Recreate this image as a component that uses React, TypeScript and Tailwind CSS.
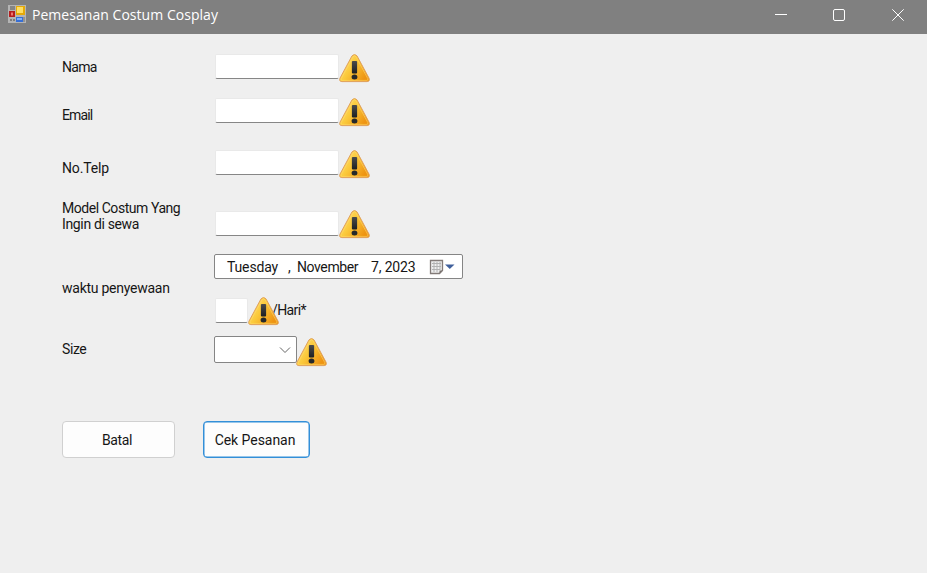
import React from 'react';

function Warning({ className = '' }: { className?: string }) {
  return (
    <svg className={`block shrink-0 ${className}`} width="31" height="29" viewBox="0 0 32 29" preserveAspectRatio="none">
      <defs>
        <linearGradient id="gold" x1="0" y1="0" x2="1" y2="0.6">
          <stop offset="0" stopColor="#ffe28a" />
          <stop offset="0.5" stopColor="#fbca3c" />
          <stop offset="1" stopColor="#ee9413" />
        </linearGradient>
        <linearGradient id="bar" x1="0" y1="0" x2="0" y2="1">
          <stop offset="0" stopColor="#4b4b4b" />
          <stop offset="1" stopColor="#1c1f22" />
        </linearGradient>
      </defs>
      <path d="M13.4 1.9Q16 -1 18.6 1.9L31 24.2Q32.2 27.6 29 27.6H3Q-.2 27.6 1 24.2Z" fill="url(#gold)" stroke="#dfa05a" strokeWidth="1" />
      <path d="M14.5 2.8Q16 .9 17.5 2.8L29.8 24.7Q30.3 26.4 28.8 26.4H3.2Q1.7 26.4 2.2 24.7Z" fill="none" stroke="#ffdd70" strokeOpacity=".55" strokeWidth="1" />
      <rect x="13.3" y="7" width="5.4" height="12.5" rx="1" fill="url(#bar)" />
      <ellipse cx="16" cy="23" rx="3" ry="2.5" fill="#26292b" />
    </svg>
  );
}

function TextBox({ className }: { className: string }) {
  return <input className={`block h-[25px] shrink-0 rounded-[2px] border border-[#e9e9e9] border-b-[#868686] bg-white outline-none ${className}`} />;
}

function AppIcon() {
  return (
    <svg className="block" width="18" height="18" viewBox="0 0 18 18">
      <rect width="18" height="18" fill="#b4b4b4" />
      <rect x="2" y="1" width="5" height="4" fill="#858585" />
      <rect x="1" y="6" width="6" height="6" fill="#b51e1e" />
      <rect x="3" y="7.5" width="2" height="3" fill="#ef7770" />
      <rect x="8" y="1" width="9" height="9" fill="#e5a908" />
      <rect x="9" y="2" width="6" height="6" fill="#ffdf63" />
      <rect x="8" y="12" width="7" height="5" fill="#376fd5" />
      <rect x="9" y="13" width="5" height="2" fill="#7fb1fa" />
      <rect x="2" y="14" width="2" height="2" fill="#7d7d7d" />
      <rect x="5" y="14" width="2" height="2" fill="#7d7d7d" />
      <rect x="15" y="12" width="2" height="5" fill="#929292" />
    </svg>
  );
}

function CalendarIcon() {
  return (
    <svg className="block shrink-0" width="26" height="16" viewBox="0 0 26 16">
      <path d="M1.5 1.5h12v10l-3 3h-9z" fill="#eeeeee" stroke="#837b78" strokeWidth="1.3" />
      <path d="M3 4.5h9M3 7.5h9M3 10.5h8M5 3v10M8 3v10M11 3v8" stroke="#b2b2b2" strokeWidth="1" />
      <path d="M10.5 14.5v-3h3z" fill="#77706d" />
      <path d="M16 5.5h9.5L20.8 10z" fill="#40609c" />
    </svg>
  );
}

export default function App() {
  return (
    <div className="h-[573px] w-[927px] overflow-hidden bg-[#efefef] font-[Roboto,sans-serif] text-[14px] leading-4 text-[#161616]">
      <header className="flex h-[34px] bg-[#808080] pl-2 text-white">
        <div className="pt-[5px]"><AppIcon /></div>
        <h1 className="ml-[6px] mt-[5px] whitespace-nowrap font-['Open_Sans',sans-serif] text-[14px] leading-5 tracking-[0.04px]">Pemesanan Costum Cosplay</h1>
        <svg className="ml-auto block" width="177" height="34" viewBox="0 0 177 34" fill="none" stroke="white">
          <path d="M25 14.5h12" />
          <rect x="83.5" y="9.5" width="11" height="11" rx="1.5" />
          <path d="M142.3 9.3l11.4 11.4M153.7 9.3l-11.4 11.4" />
        </svg>
      </header>
      <main className="pl-[62px] pt-5">
        <div className="flex h-11 items-start">
          <label className="mt-[5px] w-[153px] tracking-[-0.7px]"><span className="tracking-[-0.7px]">Nama</span></label>
          <TextBox className="w-[124px]" />
          <Warning />
        </div>
        <div className="flex h-[52px] items-start">
          <label className="mt-[9px] w-[153px] tracking-[-0.85px]">Email</label>
          <TextBox className="w-[124px]" />
          <Warning />
        </div>
        <div className="flex h-[50px] items-start">
          <label className="mt-[10px] w-[153px] tracking-[-0.15px]">No.Telp</label>
          <TextBox className="w-[124px]" />
          <Warning />
        </div>
        <div className="flex h-[54px] items-start">
          <label className="w-[153px] whitespace-nowrap"><span className="tracking-[-0.45px]">Model Costum Yang</span><br /><span className="tracking-[-0.35px]">Ingin di sewa</span></label>
          <TextBox className="mt-[11px] w-[124px]" />
          <Warning className="mt-[10px]" />
        </div>
        <div className="flex h-[84px] items-start">
          <label className="mt-[26px] w-[152px] tracking-[-0.25px]">waktu penyewaan</label>
          <div>
            <div className="flex h-[25px] w-[249px] items-center whitespace-nowrap rounded-[2px] border border-[#858585] bg-white pl-3">
              <span className="w-[61px] tracking-[-0.15px]">Tuesday</span>
              <span className="w-[9px]">,</span>
              <span className="w-[74px] tracking-[-0.4px]">November</span>
              <span className="w-[58px] tracking-[-0.15px]">7, 2023</span>
              <CalendarIcon />
            </div>
            <div className="mt-[18px] flex items-start pl-px">
              <TextBox className="mt-px w-[33px]" />
              <Warning className="relative z-10" />
              <span className="-ml-[7px] mt-[5px] tracking-[-0.6px]">/Hari*</span>
            </div>
          </div>
        </div>
        <div className="flex h-[83px] items-start">
          <label className="mt-[3px] w-[152px] tracking-[-0.4px]">Size</label>
          <button className="-mt-[2px] flex h-[27px] w-[83px] items-center justify-end rounded-[2px] border border-[#858585] bg-white pr-[5px]">
            <svg width="12" height="8" viewBox="0 0 12 8" fill="none" stroke="#666"><path d="M1 1.5l5 5 5-5" /></svg>
          </button>
          <Warning className="-ml-px" />
        </div>
        <div className="flex gap-[28px]">
          <button className="h-[37px] w-[113px] rounded-[4px] border border-[#d0d0d0] bg-[#fdfdfd] pr-[3px] tracking-[-0.4px]">Batal</button>
          <button className="h-[37px] w-[107px] rounded-[4px] border border-[#338fd8] bg-[#fdfdfd] pr-[3px] tracking-[-0.05px] shadow-[inset_0_0_0_0.5px_#338fd8]">Cek Pesanan</button>
        </div>
      </main>
    </div>
  );
}
